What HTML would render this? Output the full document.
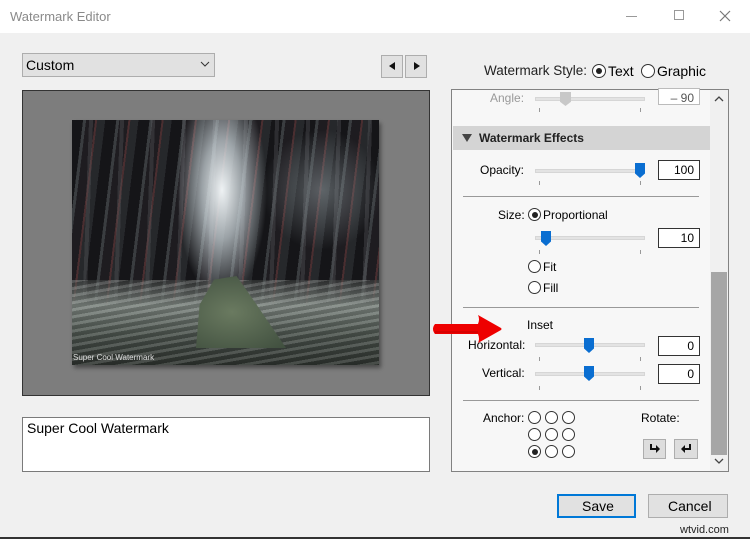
<!DOCTYPE html>
<html><head><style>
*{margin:0;padding:0;box-sizing:border-box}
body{width:750px;height:539px;background:#f0f0f0;font-family:"Liberation Sans",sans-serif;position:relative;overflow:hidden;color:#000}
.a{position:absolute}
.t{position:absolute;font-size:12px;white-space:nowrap}
.trk{position:absolute;height:4px;background:#e3e3e3;border:1px solid #d6d6d6;width:110px;left:535px}
.tick{position:absolute;width:1px;height:4px;background:#999}
.box{position:absolute;left:658px;width:42px;height:20px;background:#fff;border:1px solid #333;font-size:12px;text-align:right;padding:2px 5px 0 0}
.sep{position:absolute;left:463px;width:236px;height:1px;background:#999}
.rad{position:absolute;width:13px;height:13px;border:1px solid #333;border-radius:50%;background:#fff}
.rad.on::after{content:"";position:absolute;left:2.5px;top:2.5px;width:6px;height:6px;border-radius:50%;background:#222}
.btn{position:absolute;background:#e1e1e1;border:1px solid #adadad}
</style></head><body>
<div class="a" style="left:0;top:0;width:750px;height:33px;background:#fff"></div>
<div class="t" style="left:10px;top:9px;font-size:13px;color:#8a8a8a">Watermark Editor</div>
<div class="a" style="left:626px;top:16px;width:11px;height:1px;background:#999"></div>
<div class="a" style="left:674px;top:10px;width:10px;height:10px;border:1px solid #999"></div>
<svg class="a" style="left:719px;top:10px" width="12" height="12"><path d="M1 1L11 11M11 1L1 11" stroke="#777" stroke-width="1.2"/></svg>

<div class="btn" style="left:22px;top:53px;width:193px;height:24px"></div>
<div class="t" style="left:26px;top:57px;font-size:14px">Custom</div>
<svg class="a" style="left:200px;top:61px" width="10" height="6"><path d="M1 1L5 5L9 1" stroke="#333" fill="none"/></svg>
<div class="btn" style="left:381px;top:55px;width:22px;height:23px"></div>
<div class="btn" style="left:405px;top:55px;width:22px;height:23px"></div>
<svg class="a" style="left:387px;top:61px" width="10" height="10"><path d="M8 1L2 5L8 9Z" fill="#111"/></svg>
<svg class="a" style="left:412px;top:61px" width="10" height="10"><path d="M2 1L8 5L2 9Z" fill="#111"/></svg>

<div class="a" style="left:22px;top:90px;width:408px;height:306px;background:#7d7d7d;border:1px solid #333"></div>
<div class="a" style="left:72px;top:120px;width:307px;height:245px;box-shadow:2px 3px 4px rgba(0,0,0,.4);overflow:hidden;background:
radial-gradient(ellipse 45px 110px at 150px 70px,#eef2f4 0%,rgba(210,220,225,.7) 45%,rgba(0,0,0,0) 100%),
radial-gradient(ellipse 60px 60px at 250px 70px,rgba(150,160,165,.5),rgba(0,0,0,0)),
repeating-linear-gradient(92deg,rgba(0,0,0,0) 0 17px,rgba(90,90,95,.35) 17px 21px,rgba(0,0,0,0) 21px 31px),
repeating-linear-gradient(97deg,#151518 0 11px,#3a3d40 11px 14px,#1e1c20 14px 23px,#4a2e30 23px 25px,#26282b 25px 33px),#1a1a1a"></div>
<div class="a" style="left:72px;top:280px;width:307px;height:85px;background:
repeating-linear-gradient(170deg,rgba(255,255,255,.12) 0 3px,rgba(0,0,0,.15) 3px 7px),
linear-gradient(180deg,rgba(120,125,120,.3),#7d8580 30%,#4a524c 65%,#2e332f)"></div>
<div class="a" style="left:196px;top:276px;width:90px;height:72px;background:radial-gradient(ellipse at 40% 50%,#6a7a60,#3f4e3e);clip-path:polygon(20% 5%,45% 0,62% 30%,100% 100%,0 100%,4% 40%)"></div>
<div class="t" style="left:73px;top:353px;font-size:8px;color:#ddd">Super Cool Watermark</div>

<div class="a" style="left:22px;top:417px;width:408px;height:55px;background:#fff;border:1px solid #7a7a7a"></div>
<div class="t" style="left:27px;top:420px;font-size:14px">Super Cool Watermark</div>

<div class="t" style="left:484px;top:63px;font-size:13.5px;color:#222">Watermark Style:</div>
<div class="rad on" style="left:592px;top:64px;width:14px;height:14px"></div>
<div class="t" style="left:608px;top:63px;font-size:14px">Text</div>
<div class="rad" style="left:641px;top:64px;width:14px;height:14px"></div>
<div class="t" style="left:657px;top:63px;font-size:14px">Graphic</div>

<div class="a" style="left:451px;top:89px;width:278px;height:383px;background:#f7f7f7;border:1px solid #828282"></div>
<div class="a" style="left:710px;top:90px;width:18px;height:381px;background:#f0f0f0"></div>
<div class="a" style="left:711px;top:272px;width:16px;height:183px;background:#a6a6a6"></div>
<svg class="a" style="left:714px;top:96px" width="10" height="6"><path d="M1 5L5 1L9 5" stroke="#444" fill="none" stroke-width="1.3"/></svg>
<svg class="a" style="left:714px;top:458px" width="10" height="6"><path d="M1 1L5 5L9 1" stroke="#444" fill="none" stroke-width="1.3"/></svg>

<div class="t" style="left:490px;top:91px;color:#999">Angle:</div>
<div class="trk" style="top:97px"></div>
<div class="a" style="left:560px;top:92px;width:11px;height:14px;background:#c8c8c8;clip-path:polygon(0 0,100% 0,100% 70%,50% 100%,0 70%)"></div>
<div class="box" style="top:88px;height:17px;border-color:#bbb;padding-top:2px;color:#555">– 90</div>
<div class="tick" style="left:539px;top:108px"></div><div class="tick" style="left:640px;top:108px"></div>

<div class="a" style="left:453px;top:126px;width:257px;height:24px;background:#d4d4d4"></div>
<svg class="a" style="left:462px;top:134px" width="10" height="8"><path d="M0 0H10L5 8Z" fill="#444"/></svg>
<div class="t" style="left:479px;top:131px;font-weight:bold;font-size:12px;color:#222">Watermark Effects</div>

<div class="t" style="left:480px;top:163px">Opacity:</div>
<div class="trk" style="top:169px"></div>
<div class="a" style="left:635px;top:163px;width:10px;height:15px;background:#0a6ed1;clip-path:polygon(0 0,100% 0,100% 70%,50% 100%,0 70%)"></div>
<div class="box" style="top:160px">100</div>
<div class="tick" style="left:539px;top:181px"></div><div class="tick" style="left:640px;top:181px"></div>
<div class="sep" style="top:196px"></div>

<div class="t" style="left:498px;top:208px">Size:</div>
<div class="rad on" style="left:528px;top:208px"></div>
<div class="t" style="left:543px;top:208px">Proportional</div>
<div class="trk" style="top:236px"></div>
<div class="a" style="left:541px;top:231px;width:10px;height:15px;background:#0a6ed1;clip-path:polygon(0 0,100% 0,100% 70%,50% 100%,0 70%)"></div>
<div class="box" style="top:228px">10</div>
<div class="tick" style="left:539px;top:250px"></div><div class="tick" style="left:640px;top:250px"></div>
<div class="rad" style="left:528px;top:260px"></div>
<div class="t" style="left:543px;top:260px">Fit</div>
<div class="rad" style="left:528px;top:281px"></div>
<div class="t" style="left:543px;top:281px">Fill</div>
<div class="sep" style="top:307px"></div>

<div class="t" style="left:527px;top:318px">Inset</div>
<div class="t" style="left:468px;top:338px">Horizontal:</div>
<div class="trk" style="top:343px"></div>
<div class="a" style="left:584px;top:338px;width:10px;height:15px;background:#0a6ed1;clip-path:polygon(0 0,100% 0,100% 70%,50% 100%,0 70%)"></div>
<div class="box" style="top:336px">0</div>
<div class="tick" style="left:539px;top:357px"></div><div class="tick" style="left:640px;top:357px"></div>
<div class="t" style="left:482px;top:366px">Vertical:</div>
<div class="trk" style="top:372px"></div>
<div class="a" style="left:584px;top:366px;width:10px;height:15px;background:#0a6ed1;clip-path:polygon(0 0,100% 0,100% 70%,50% 100%,0 70%)"></div>
<div class="box" style="top:364px">0</div>
<div class="tick" style="left:539px;top:386px"></div><div class="tick" style="left:640px;top:386px"></div>
<div class="sep" style="top:400px"></div>

<div class="t" style="left:483px;top:411px">Anchor:</div>
<div class="rad" style="left:528px;top:411px"></div><div class="rad" style="left:545px;top:411px"></div><div class="rad" style="left:562px;top:411px"></div>
<div class="rad" style="left:528px;top:428px"></div><div class="rad" style="left:545px;top:428px"></div><div class="rad" style="left:562px;top:428px"></div>
<div class="rad on" style="left:528px;top:445px"></div><div class="rad" style="left:545px;top:445px"></div><div class="rad" style="left:562px;top:445px"></div>
<div class="t" style="left:641px;top:411px">Rotate:</div>
<div class="btn" style="left:643px;top:439px;width:23px;height:20px;background:#ddd"></div>
<div class="btn" style="left:674px;top:439px;width:24px;height:20px;background:#ddd"></div>
<svg class="a" style="left:648px;top:442px" width="14" height="14"><path d="M3 2V7H9" stroke="#111" stroke-width="2" fill="none"/><path d="M8 3L12 7L8 11Z" fill="#111"/></svg>
<svg class="a" style="left:679px;top:442px" width="14" height="14"><path d="M11 2V7H5" stroke="#111" stroke-width="2" fill="none"/><path d="M6 3L2 7L6 11Z" fill="#111"/></svg>

<svg class="a" style="left:430px;top:312px" width="75" height="36"><path d="M5 12H48Q50 7 48 3L71 16Q72 17 71 18L48 31Q50 27 48 22H5Q1 17 5 12Z" fill="#e00"/><path d="M5 20H48" stroke="#900" stroke-width="1" opacity=".5"/></svg>

<div class="btn" style="left:557px;top:494px;width:79px;height:24px;border:2px solid #0078d7"></div>
<div class="t" style="left:582px;top:498px;font-size:14px">Save</div>
<div class="btn" style="left:648px;top:494px;width:80px;height:24px"></div>
<div class="t" style="left:668px;top:498px;font-size:14px">Cancel</div>
<div class="t" style="left:680px;top:524px;font-size:11px;color:#222">wtvid.com</div>
<div class="a" style="left:0;top:537px;width:750px;height:2px;background:#333"></div>
</body></html>
